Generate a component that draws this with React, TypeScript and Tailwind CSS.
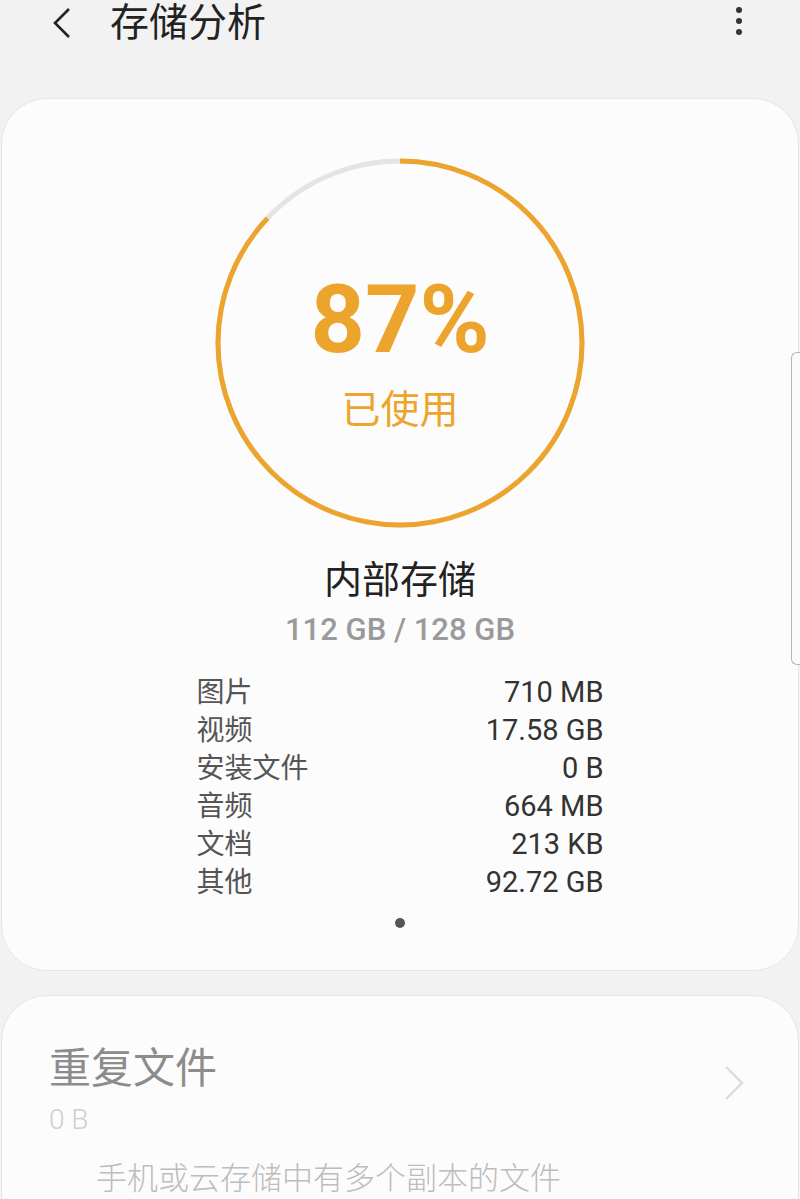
import React from 'react';

const rows = [
  ['图片', '710 MB'],
  ['视频', '17.58 GB'],
  ['安装文件', '0 B'],
  ['音频', '664 MB'],
  ['文档', '213 KB'],
  ['其他', '92.72 GB'],
];

const font = { fontFamily: "Roboto, 'Noto Sans CJK SC', sans-serif" };

function Ring({ percent }: { percent: number }) {
  const r = 182;
  const c = 2 * Math.PI * r;
  return (
    <div className="relative w-[370px] h-[370px]">
      <svg width="370" height="370" viewBox="0 0 370 370" className="-rotate-90">
        <circle cx="185" cy="185" r={r} fill="none" stroke="#e4e4e4" strokeWidth="5" />
        <circle
          cx="185"
          cy="185"
          r={r}
          fill="none"
          stroke="#eda42c"
          strokeWidth="5"
          strokeDasharray={`${(c * percent) / 100} ${c}`}
        />
      </svg>
      <div className="absolute inset-0 flex flex-col items-center">
        <div className="mt-[110px] text-[95px] leading-[104px] font-bold text-[#eda42c]">{percent}%</div>
        <div className="mt-[14px] text-[39px] leading-[48px] text-[#eda42c]">已使用</div>
      </div>
    </div>
  );
}

export default function App() {
  return (
    <div className="relative min-h-[1199px] bg-[#f2f2f2] overflow-hidden" style={font}>
      <div className="flex items-center h-[46px] px-[48px]">
        <svg width="26" height="34" viewBox="0 0 26 34">
          <path d="M21 3 L7 17 L21 31" fill="none" stroke="#222" strokeWidth="2.6" />
        </svg>
        <h1 className="ml-[36px] text-[39px] leading-[46px] text-[#222]">存储分析</h1>
        <div className="ml-auto mr-[10px] flex flex-col gap-[5px] mt-[-4px]">
          <span className="w-[6px] h-[6px] rounded-full bg-[#333]" />
          <span className="w-[6px] h-[6px] rounded-full bg-[#333]" />
          <span className="w-[6px] h-[6px] rounded-full bg-[#333]" />
        </div>
      </div>

      <div className="mt-[52px] mx-[1px] bg-[#fcfcfc] rounded-[46px] border border-[#e6e6e6] pt-[59px] pb-[42px] flex flex-col items-center">
        <Ring percent={87} />
        <div className="mt-[30px] text-[38px] leading-[44px] text-[#222]">内部存储</div>
        <div className="mt-[10px] text-[31px] leading-[36px] text-[#9a9a9a] font-medium">112 GB / 128 GB</div>
        <div className="mt-[26px] w-[407px] flex flex-col">
          {rows.map(([k, v]) => (
            <div key={k} className="flex justify-between h-[38px] items-center">
              <span className="text-[28px] text-[#555]">{k}</span>
              <span className="text-[29px] text-[#333]">{v}</span>
            </div>
          ))}
        </div>
        <span className="mt-[16px] w-[10px] h-[10px] rounded-full bg-[#555]" />
      </div>

      <div className="mt-[24px] mx-[1px] bg-[#fcfcfc] rounded-t-[46px] border border-[#e6e6e6] pt-[48px] pl-[47px] pr-[52px] pb-[20px]">
        <div className="flex items-center">
          <div className="flex-1">
            <div className="text-[42px] leading-[50px] text-[#8c8c8c]">重复文件</div>
            <div className="mt-[8px] text-[28px] leading-[36px] text-[#cfcfcf] font-light">0 B</div>
          </div>
          <svg width="24" height="38" viewBox="0 0 24 38" className="mt-[-16px]">
            <path d="M4 3 L20 19 L4 35" fill="none" stroke="#dcdcdc" strokeWidth="2.4" />
          </svg>
        </div>
        <div className="mt-[21px] ml-[47px] text-[31px] leading-[40px] text-[#bdbdbd] font-light">手机或云存储中有多个副本的文件</div>
      </div>

      <div className="absolute right-0 top-[352px] w-[9px] h-[313px] rounded-l-[6px] border border-r-0 border-[#b5b5b5] bg-[#fafafa]" />
    </div>
  );
}
